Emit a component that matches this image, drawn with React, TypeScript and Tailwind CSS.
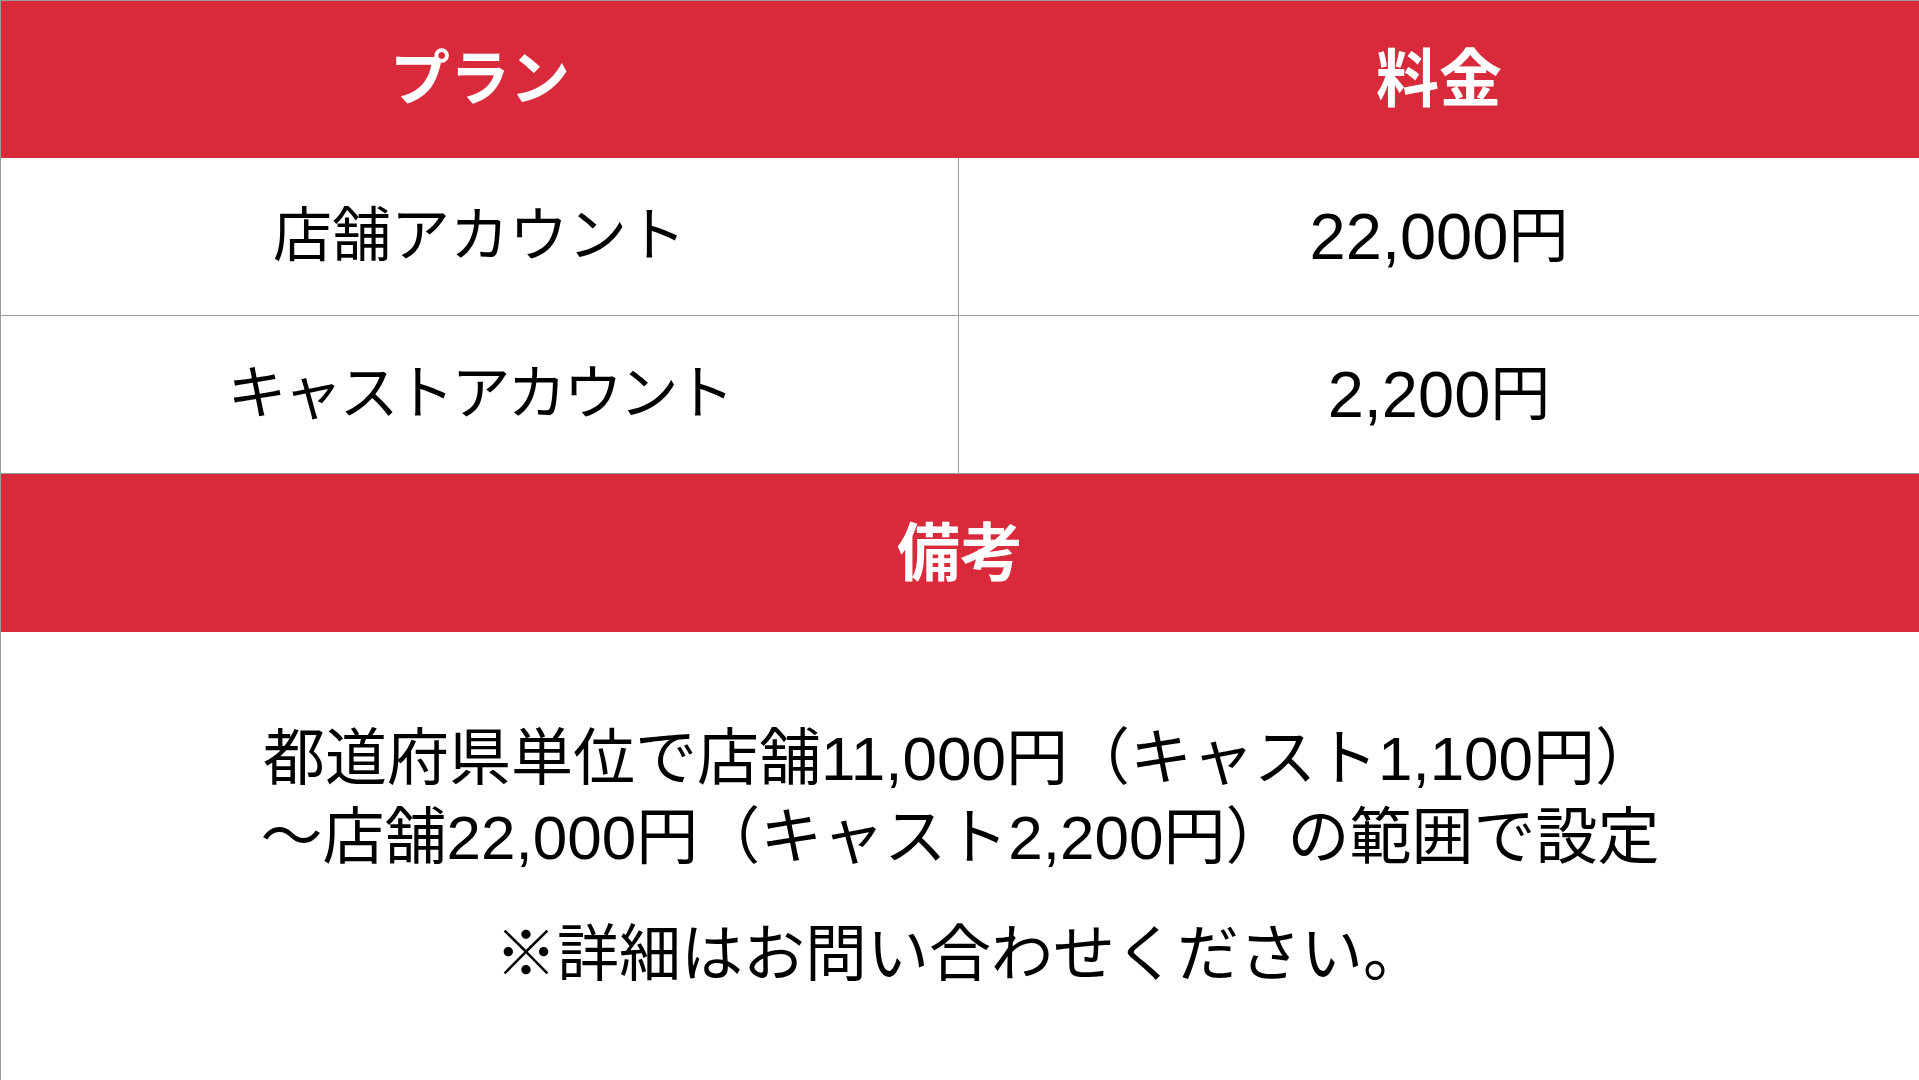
const jp = "font-['Liberation_Sans','Noto_Sans_CJK_JP',sans-serif]"

const plans = [
  { name: "店舗アカウント", price: "22,000", tracking: "" },
  { name: "キャストアカウント", price: "2,200", tracking: "tracking-[-3px]" },
]

export default function App() {
  return (
    <div className={`flex h-[1080px] w-[1919px] flex-col border-l border-t border-[#9a9a9a] bg-white text-black ${jp}`}>
      <div className="grid h-[157px] shrink-0 grid-cols-[958px_1fr] bg-[#d92a3b] font-bold text-white">
        <div className="flex items-center justify-center text-[60px]">プラン</div>
        <div className="flex items-center justify-center text-[63px]">料金</div>
      </div>

      {plans.map((plan) => (
        <div key={plan.name} className="grid h-[158px] shrink-0 grid-cols-[958px_1fr] border-b border-[#9a9a9a] last-of-type:border-b-0">
          <div className={`flex items-center justify-center border-r border-[#9a9a9a] text-[59px] ${plan.tracking}`}>{plan.name}</div>
          <div className="flex items-center justify-center text-[60px]">
            <span className="text-[65px]">{plan.price}</span>
            <span>円</span>
          </div>
        </div>
      ))}

      <div className="flex h-[158px] shrink-0 items-center justify-center bg-[#d92a3b] text-[63px] font-bold text-white">
        備考
      </div>

      <div className="flex flex-1 flex-col items-center justify-center text-[62px] leading-[79px]">
        <p className="text-center">
          都道府県単位で店舗11,000円（キャスト1,100円）
          <br />
          〜店舗22,000円（キャスト2,200円）の範囲で設定
        </p>
        <p className="mt-[38px]">※詳細はお問い合わせください。</p>
      </div>
    </div>
  )
}
